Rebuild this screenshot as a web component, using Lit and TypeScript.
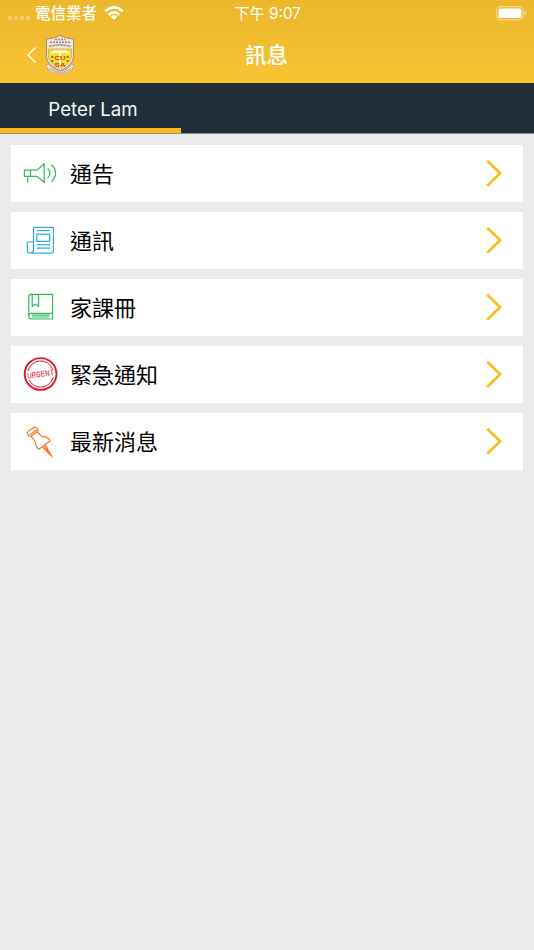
import { LitElement, html, svg, css } from 'lit';
import { customElement, property } from 'lit/decorators.js';

type IconName = 'notice' | 'news' | 'homework' | 'urgent' | 'pin';

const ICONS = {
  notice: svg`
    <g stroke="#35b862">
      <path d="M4.4 17.1H17L24.2 10.7V29.5L17 23.3H4.4ZM10.5 17.1V23.3M7.7 23.3V29.8" />
      <path d="M27.6 15.3Q32.2 20.1 27.6 25.1M31.4 11.5Q39.8 20.3 31.4 28.9" />
    </g>`,
  news: svg`
    <g stroke="#2caeea">
      <path d="M13.5 29V7.4H33.4V31Q33.4 33.1 31 33.1H10Q7.4 33.1 7.4 31V22H13.5V30Q13.5 33 10.5 33" />
      <path d="M16.8 10.5H30M16.8 24.6H30M16.8 28.2H30M16.8 14.2H29.6V21.4H16.8Z" />
    </g>`,
  homework: svg`
    <g stroke="#35b862">
      <path d="M32.6 26.3V7.4H11.5Q8.8 7.4 8.8 10V29.5Q8.8 32 11.5 32H32.6V26.3H11.5Q8.8 26.3 8.8 29" />
      <path d="M12.2 7.4V19.4L15.4 17L18.6 19.4V7.4M11.8 28.2H29.5M12.2 30H29.5" />
    </g>`,
  urgent: svg`
    <g stroke="#e5182f">
      <circle cx="20.6" cy="20" r="15.9" stroke-width="1.9" />
      <path d="M8 17A12.9 12.9 0 0 1 32.6 15.2M9 25.9A12.9 12.9 0 0 0 33.1 23.5" stroke-width="1" />
    </g>
    <text class="stamp" x="20.6" y="22.9" textLength="27" lengthAdjust="spacingAndGlyphs" transform="rotate(-8 20.6 20)">URGENT</text>`,
  pin: svg`
    <g stroke="#f27a28">
      <path d="M7.4 12.5Q7 11 8.4 10L14 6.5Q15.5 5.7 16.5 6.7L18 8.8L17 10.8L22.3 15.9Q26.5 14.5 29.5 19L30 19.8L19 28.3Q15.2 25.5 15.5 21L11.3 15.3L8.9 15.2Z" />
      <path d="M9.7 13.9L16.6 9.1M11.3 15.3L17 10.8M22.4 26L32 35.5L25.2 23.8M24 25L32 35.5" />
    </g>`,
};

@customElement('line-icon')
export class LineIcon extends LitElement {
  @property() name: IconName = 'notice';

  static styles = css`
    :host {
      display: block;
      width: 40px;
      height: 40px;
    }

    svg {
      display: block;
      fill: none;
      stroke-width: 1.2;
      stroke-linejoin: round;
    }

    .stamp {
      fill: #e5182f;
      font: 8.5px 'Liberation Mono', monospace;
      text-anchor: middle;
    }
  `;

  render() {
    return html`<svg width="40" height="40" viewBox="0 0 40 40">${ICONS[this.name]}</svg>`;
  }
}

@customElement('menu-row')
export class MenuRow extends LitElement {
  @property() icon: IconName = 'notice';
  @property() label = '';

  static styles = css`
    :host {
      display: flex;
      align-items: center;
      height: 57px;
      padding: 0 20px 1px 9px;
      box-sizing: border-box;
      background: #fff;
    }

    .label {
      flex: 1;
      margin-left: 10px;
      padding-top: 2px;
      font-size: 22px;
      line-height: 32px;
      color: #000;
    }

    .chevron {
      display: block;
      fill: none;
      stroke: #fbbc16;
      stroke-width: 2.6;
    }
  `;

  render() {
    return html`
      <line-icon name=${this.icon}></line-icon>
      <span class="label">${this.label}</span>
      <svg class="chevron" width="18" height="30" viewBox="0 0 18 30">
        <path d="M2.2 2.8L15.2 15.3L2.2 27.8" />
      </svg>
    `;
  }
}

@customElement('school-crest')
export class SchoolCrest extends LitElement {
  static styles = css`
    :host {
      display: block;
      width: 30px;
      height: 42px;
    }

    svg {
      display: block;
    }

    .letters {
      fill: #e0301f;
      font: bold 6px 'Liberation Sans', sans-serif;
      text-anchor: middle;
    }
  `;

  render() {
    return html`
      <svg width="30" height="42" viewBox="0 0 30 42">
        <path d="M1.5 5Q9 5 15 1.5Q21 5 28.5 5V23Q28 31 15 37Q2 31 1.5 23Z" fill="#f2e6da" stroke="#a98a78" />
        <path d="M3.5 15H26.5V23Q25.5 29.5 15 35Q4.5 29.5 3.5 23Z" fill="#f5df22" stroke="#b69a62" stroke-width="0.6" />
        <path d="M10 5.5H20M5 8.3H25" stroke="#9c8580" stroke-width="1.5" stroke-dasharray="2 1" />
        <path d="M4 12.5Q15 9.5 26 12.5" fill="none" stroke="#ab938b" stroke-width="1.6" stroke-dasharray="3 .6" />
        <path d="M5 20Q8 15 15 16.5Q22 15 25 20Q20 18.5 16 19.5V34H14V19.5Q10 18.5 5 20Z" fill="#fff8df" />
        <path d="M6 23H8.5M6 27H8.5M21.5 23H24M21.5 27H24" stroke="#806622" stroke-width="1.6" />
        <text class="letters" x="15" y="26.2" textLength="11" lengthAdjust="spacingAndGlyphs">CU</text>
        <text class="letters" x="15" y="33.4" textLength="11" lengthAdjust="spacingAndGlyphs">SA</text>
        <path d="M1 30L4.5 31Q7 36 15 37Q23 36 25.5 31L29 30L27 36Q15 44 3 36Z" fill="#f2e8df" stroke="#b19787" stroke-width="0.7" />
        <path d="M4 34.5Q15 42 26 34.5" fill="none" stroke="#a48c84" stroke-width="1.2" stroke-dasharray="1.5 .8" />
      </svg>
    `;
  }
}

const ROWS: { icon: IconName; label: string }[] = [
  { icon: 'notice', label: '通告' },
  { icon: 'news', label: '通訊' },
  { icon: 'homework', label: '家課冊' },
  { icon: 'urgent', label: '緊急通知' },
  { icon: 'pin', label: '最新消息' },
];

@customElement('app-root')
export class AppRoot extends LitElement {
  static styles = css`
    :host {
      display: block;
      min-height: 950px;
      background: #ebebeb;
      font-family: Inter, 'Noto Sans CJK TC', sans-serif;
    }

    header {
      height: 83px;
      box-sizing: border-box;
      background: linear-gradient(#ebb72b, #f8c434);
      color: #fff;
    }

    svg {
      display: block;
    }

    .status,
    .nav {
      display: grid;
      grid-template-columns: 1fr auto 1fr;
      align-items: center;
    }

    .status {
      height: 26px;
      padding: 0 7px 0 8px;
      font-size: 15.5px;
      line-height: 24px;
    }

    .carrier {
      display: flex;
      align-items: center;
      font-weight: 500;
    }

    .carrier span:nth-child(2),
    .time {
      padding-top: 1px;
    }

    .time {
      font-size: 15.3px;
    }

    .dots {
      display: flex;
      gap: 2px;
      margin: 9px 5px 0 0;
    }

    .dots i {
      width: 4px;
      height: 4px;
      border-radius: 1px;
      background: rgba(255, 255, 255, 0.3);
    }

    .wifi {
      margin-left: 7px;
    }

    .battery {
      justify-self: end;
    }

    .nav {
      height: 57px;
      padding: 0 27px 0 26px;
    }

    .back {
      display: flex;
      align-items: center;
      gap: 8px;
    }

    h1 {
      margin: 0;
      font-size: 21.5px;
      line-height: 32px;
      font-weight: 500;
    }

    .tabs {
      display: flex;
      height: 51px;
      background: #222e37;
      border-bottom: 1px solid #8b9194;
      box-sizing: border-box;
    }

    .tab {
      width: 181px;
      padding: 0 0 0 5px;
      box-sizing: border-box;
      border-bottom: 5px solid #fdbb12;
      background: #1f2f39;
      color: #f6f7f7;
      font-size: 18.7px;
      line-height: 53px;
      text-align: center;
    }

    .list {
      display: grid;
      gap: 10.1px;
      padding: 11px;
    }
  `;

  render() {
    return html`
      <header>
        <div class="status">
          <div class="carrier">
            <span class="dots"><i></i><i></i><i></i><i></i></span>
            <span>電信業者</span>
            <svg class="wifi" width="20" height="16" viewBox="0 0 20 16">
              <g fill="none" stroke="#fff" stroke-width="2.7">
                <path d="M1.3 6.3Q10 -1.5 18.7 6.3M4.6 9.7Q10 5 15.4 9.7" />
              </g>
              <path d="M6.7 11.7Q10 9 13.3 11.7L10 15Z" fill="#fff" />
            </svg>
          </div>
          <span class="time">下午 9:07</span>
          <svg class="battery" width="31" height="15" viewBox="0 0 31 15">
            <rect x="0.7" y="0.7" width="26.6" height="13.2" rx="4" fill="none" stroke="#fff" stroke-opacity=".45" stroke-width="1.2" />
            <rect x="2.5" y="2.5" width="23" height="9.6" rx="2.2" fill="#fff" />
            <path d="M28.8 5Q31.6 7.3 28.8 9.6Z" fill="#fff" fill-opacity=".5" />
          </svg>
        </div>
        <div class="nav">
          <div class="back">
            <svg width="11" height="18" viewBox="0 0 11 18">
              <path d="M9.5 1.5L2 9L9.5 16.5" fill="none" stroke="#fff" stroke-width="1.3" />
            </svg>
            <school-crest></school-crest>
          </div>
          <h1>訊息</h1>
        </div>
      </header>
      <nav class="tabs">
        <div class="tab">Peter Lam</div>
      </nav>
      <main class="list">
        ${ROWS.map((row) => html`<menu-row icon=${row.icon} label=${row.label}></menu-row>`)}
      </main>
    `;
  }
}
